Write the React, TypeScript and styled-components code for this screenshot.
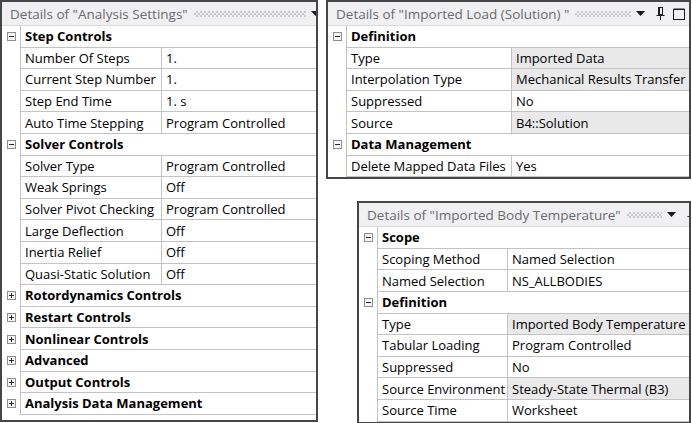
import React from 'react';
import styled, { createGlobalStyle } from 'styled-components';

const GlobalStyle = createGlobalStyle`
  html, body {
    margin: 0;
    padding: 0;
    background: #ffffff;
  }
  body {
    font-family: "Open Sans", "Noto Sans", "Liberation Sans", Arial, sans-serif;
    color: #000;
  }
  * {
    box-sizing: border-box;
  }
`;

const LINE = '#c3c3c3';

const Page = styled.div`
  display: flex;
  align-items: flex-start;
  width: 692px;
  height: 423px;
  overflow: hidden;
`;

const RightColumn = styled.div`
  display: flex;
  flex-direction: column;
  margin-left: 8px;
`;

const Panel = styled.div<{ $width: number; $height?: number; $offsetX?: number; $offsetY?: number }>`
  width: ${(p) => p.$width}px;
  height: ${(p) => (p.$height ? `${p.$height}px` : 'auto')};
  margin-left: ${(p) => p.$offsetX ?? 0}px;
  margin-top: ${(p) => p.$offsetY ?? 0}px;
  border: 2px solid #464646;
  background: #fff;
  overflow: hidden;
  flex-shrink: 0;
`;

/* $overflow lets the tool icons run past the panel edge, where the panel clips them */
const TitleBar = styled.div<{ $overflow: number }>`
  height: 24px;
  display: flex;
  align-items: center;
  padding: 0 4px 0 8px;
  margin-right: -${(p) => p.$overflow}px;
  background: #f0f0f3;
  border-bottom: 1px solid #dadada;
  white-space: nowrap;
`;

const TitleText = styled.span`
  font-size: 13.5px;
  color: #6b6b6b;
  flex-shrink: 0;
`;

const Grip = styled.div`
  flex: 1;
  min-width: 20px;
  height: 6px;
  margin: 0 5px 0 6px;
  background: repeating-conic-gradient(#c9c9c9 0 25%, transparent 0 50%) 0 0 / 4px 4px;
`;

const Tool = styled.span<{ $gap?: number }>`
  display: flex;
  align-items: center;
  margin-left: ${(p) => p.$gap ?? 0}px;
  flex-shrink: 0;
`;

const Row = styled.div`
  display: flex;
  height: 21.6px;
  font-size: 13px;
`;

const Gutter = styled.div`
  width: 18px;
  flex-shrink: 0;
  display: flex;
  align-items: center;
  justify-content: center;
`;

const Cells = styled.div`
  flex: 1;
  min-width: 0;
  display: flex;
  border-left: 1px solid ${LINE};
  border-bottom: 1px solid ${LINE};
`;

const CategoryCell = styled.div`
  flex: 1;
  display: flex;
  align-items: center;
  padding-left: 4px;
  font-weight: 700;
  white-space: nowrap;
`;

const NameCell = styled.div<{ $width: number }>`
  width: ${(p) => p.$width}px;
  flex-shrink: 0;
  display: flex;
  align-items: center;
  padding-left: 4px;
  border-right: 1px solid ${LINE};
  white-space: nowrap;
  overflow: hidden;
`;

const ValueCell = styled.div<{ $readOnly?: boolean }>`
  flex: 1;
  display: flex;
  align-items: center;
  padding-left: 4px;
  background: ${(p) => (p.$readOnly ? '#e9e9e9' : 'transparent')};
  white-space: nowrap;
  overflow: hidden;
`;

type Prop = { name: string; value: string; readOnly?: boolean };
type Group = { title: string; open: boolean; props?: Prop[] };

const Expander = ({ open }: { open: boolean }) => (
  <svg width="9" height="9" viewBox="0 0 9 9">
    <rect x="0.5" y="0.5" width="8" height="8" fill="#f7f7f7" stroke="#8e8e8e" />
    <line x1="2" y1="4.5" x2="7" y2="4.5" stroke="#2a2a2a" />
    {!open && <line x1="4.5" y1="2" x2="4.5" y2="7" stroke="#2a2a2a" />}
  </svg>
);

const DropTriangle = () => (
  <svg width="9" height="5" viewBox="0 0 9 5">
    <polygon points="0,0 9,0 4.5,5" fill="#1a1a1a" />
  </svg>
);

const PinIcon = () => (
  <svg width="9" height="13" viewBox="0 0 9 13">
    <rect x="2.5" y="0.5" width="4" height="7" fill="none" stroke="#1e1e1e" />
    <line x1="3.5" y1="1" x2="3.5" y2="7.5" stroke="#1e1e1e" />
    <line x1="0.5" y1="8.5" x2="8.5" y2="8.5" stroke="#1e1e1e" />
    <line x1="4.5" y1="9" x2="4.5" y2="13" stroke="#1e1e1e" />
  </svg>
);

const MaximizeIcon = () => (
  <svg width="12" height="12" viewBox="0 0 12 12">
    <rect x="0.5" y="1.5" width="11" height="10" fill="none" stroke="#1e1e1e" />
    <line x1="0.5" y1="1" x2="11.5" y2="1" stroke="#1e1e1e" />
  </svg>
);

type DetailsProps = {
  title: string;
  groups: Group[];
  nameWidth: number;
  width: number;
  height?: number;
  offsetX?: number;
  offsetY?: number;
  overflow: number;
};

const DetailsPanel = ({ title, groups, nameWidth, width, height, offsetX, offsetY, overflow }: DetailsProps) => (
  <Panel $width={width} $height={height} $offsetX={offsetX} $offsetY={offsetY}>
    <TitleBar $overflow={overflow}>
      <TitleText>Details of "{title}"</TitleText>
      <Grip />
      <Tool>
        <DropTriangle />
      </Tool>
      <Tool $gap={11}>
        <PinIcon />
      </Tool>
      <Tool $gap={8}>
        <MaximizeIcon />
      </Tool>
    </TitleBar>
    {groups.map((g) => (
      <React.Fragment key={g.title}>
        <Row>
          <Gutter>
            <Expander open={g.open} />
          </Gutter>
          <Cells>
            <CategoryCell>{g.title}</CategoryCell>
          </Cells>
        </Row>
        {g.open &&
          g.props?.map((p) => (
            <Row key={p.name}>
              <Gutter />
              <Cells>
                <NameCell $width={nameWidth}>{p.name}</NameCell>
                <ValueCell $readOnly={p.readOnly}>{p.value}</ValueCell>
              </Cells>
            </Row>
          ))}
      </React.Fragment>
    ))}
  </Panel>
);

const analysisGroups: Group[] = [
  {
    title: 'Step Controls',
    open: true,
    props: [
      { name: 'Number Of Steps', value: '1.' },
      { name: 'Current Step Number', value: '1.' },
      { name: 'Step End Time', value: '1. s' },
      { name: 'Auto Time Stepping', value: 'Program Controlled' },
    ],
  },
  {
    title: 'Solver Controls',
    open: true,
    props: [
      { name: 'Solver Type', value: 'Program Controlled' },
      { name: 'Weak Springs', value: 'Off' },
      { name: 'Solver Pivot Checking', value: 'Program Controlled' },
      { name: 'Large Deflection', value: 'Off' },
      { name: 'Inertia Relief', value: 'Off' },
      { name: 'Quasi-Static Solution', value: 'Off' },
    ],
  },
  { title: 'Rotordynamics Controls', open: false },
  { title: 'Restart Controls', open: false },
  { title: 'Nonlinear Controls', open: false },
  { title: 'Advanced', open: false },
  { title: 'Output Controls', open: false },
  { title: 'Analysis Data Management', open: false },
];

const importedLoadGroups: Group[] = [
  {
    title: 'Definition',
    open: true,
    props: [
      { name: 'Type', value: 'Imported Data', readOnly: true },
      { name: 'Interpolation Type', value: 'Mechanical Results Transfer', readOnly: true },
      { name: 'Suppressed', value: 'No' },
      { name: 'Source', value: 'B4::Solution', readOnly: true },
    ],
  },
  {
    title: 'Data Management',
    open: true,
    props: [{ name: 'Delete Mapped Data Files', value: 'Yes' }],
  },
];

const bodyTempGroups: Group[] = [
  {
    title: 'Scope',
    open: true,
    props: [
      { name: 'Scoping Method', value: 'Named Selection' },
      { name: 'Named Selection', value: 'NS_ALLBODIES' },
    ],
  },
  {
    title: 'Definition',
    open: true,
    props: [
      { name: 'Type', value: 'Imported Body Temperature', readOnly: true },
      { name: 'Tabular Loading', value: 'Program Controlled' },
      { name: 'Suppressed', value: 'No' },
      { name: 'Source Environment', value: 'Steady-State Thermal (B3)', readOnly: true },
      { name: 'Source Time', value: 'Worksheet' },
    ],
  },
];

export default function App() {
  return (
    <>
      <GlobalStyle />
      <Page>
        <DetailsPanel
          title="Analysis Settings"
          groups={analysisGroups}
          nameWidth={141}
          width={318}
          height={422}
          overflow={48}
        />
        <RightColumn>
          <DetailsPanel
            title="Imported Load (Solution) "
            groups={importedLoadGroups}
            nameWidth={165}
            width={365}
            overflow={0}
          />
          <DetailsPanel
            title="Imported Body Temperature"
            groups={bodyTempGroups}
            nameWidth={130}
            width={334}
            offsetX={31}
            offsetY={22}
            overflow={31}
          />
        </RightColumn>
      </Page>
    </>
  );
}
